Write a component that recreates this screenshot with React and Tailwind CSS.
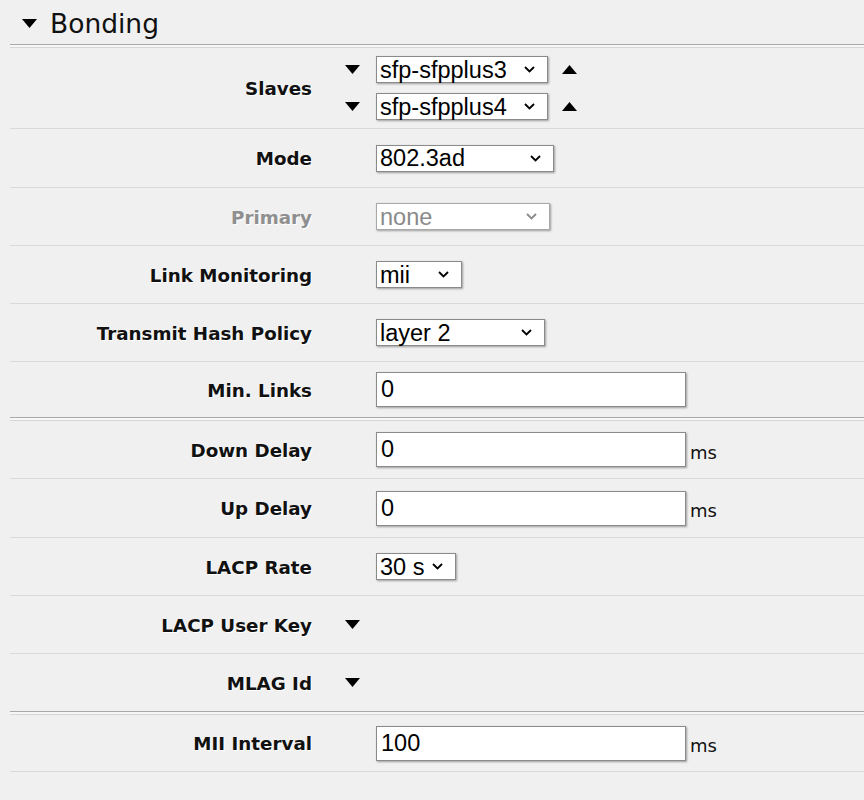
import React from "react";

const labelCls =
  "w-[302px] shrink-0 text-right font-['DejaVu_Sans',sans-serif] font-bold text-[18.3px] leading-none pt-[3px] [text-shadow:1px_1px_0_#ffffff]";
const ctrlFont = "font-['Liberation_Sans',Arial,sans-serif] text-[23.5px] leading-none";

function Tri({ up = false, color = "#000" }) {
  return (
    <svg width="15" height="9" viewBox="0 0 15 9" className="block">
      {up ? (
        <polygon points="0,9 15,9 7.5,0" fill={color} />
      ) : (
        <polygon points="0,0 15,0 7.5,9" fill={color} />
      )}
    </svg>
  );
}

function Chevron({ color = "#000" }) {
  return (
    <svg width="11" height="7" viewBox="0 0 11 7" className="block">
      <polyline points="1,1 5.5,5.5 10,1" fill="none" stroke={color} strokeWidth="1.8" />
    </svg>
  );
}

function Select({ value, width, disabled = false }) {
  return (
    <div
      className={`flex items-center justify-between h-[27px] bg-white border pl-[3px] pr-[12px] shadow-[1px_1px_2px_rgba(0,0,0,0.35)] ${ctrlFont} ${
        disabled ? "border-[#a8a8a8] text-[#8a8a8a]" : "border-[#8a8a8a] text-black"
      }`}
      style={{ width }}
    >
      <span className="pt-[2px]">{value}</span>
      <Chevron color={disabled ? "#8a8a8a" : "#000"} />
    </div>
  );
}

function Input({ value }) {
  return (
    <div
      className={`flex items-center w-[310px] h-[35px] bg-white border border-[#8a8a8a] pl-[4px] pt-[1px] shadow-[1px_1px_2px_rgba(0,0,0,0.35)] ${ctrlFont} text-black`}
    >
      {value}
    </div>
  );
}

function Row({ label, children, disabled = false, h = "h-[58px]", noBorder = false }) {
  return (
    <div className={`flex items-center ${h} ${noBorder ? "" : "border-b border-[#d9d9d9]"}`}>
      <div className={`${labelCls} ${disabled ? "text-[#8f8f8f]" : "text-[#111]"}`}>{label}</div>
      <div className="ml-[64px] flex items-center">{children}</div>
    </div>
  );
}

function DoubleSep() {
  return (
    <div className="h-[4px] border-t border-[#a9a9a9] border-b border-b-[#d6d6d6] bg-[#f7f7f7]" />
  );
}

function Ms() {
  return (
    <span className="ml-[4px] mt-[6px] font-['DejaVu_Sans',sans-serif] text-[18px] leading-none text-[#111]">
      ms
    </span>
  );
}

export default function App() {
  return (
    <div className="w-[864px] h-[800px] bg-[#f0f0f0] overflow-hidden">
      <div className="h-[44px] flex items-center pl-[22px] pt-[3px]">
        <Tri />
        <span className="ml-[13px] font-['DejaVu_Sans',sans-serif] text-[26.5px] leading-none text-[#111] mt-[1px]">
          Bonding
        </span>
      </div>
      <div className="ml-[10px]">
        <DoubleSep />
        <div className="flex items-center h-[81px] border-b border-[#d9d9d9]">
          <div className={`${labelCls} text-[#111]`}>Slaves</div>
          <div className="ml-[33px] flex flex-col gap-[10px]">
            {["sfp-sfpplus3", "sfp-sfpplus4"].map((v) => (
              <div key={v} className="flex items-center">
                <Tri />
                <div className="ml-[16px]">
                  <Select value={v} width={172} />
                </div>
                <div className="ml-[14px]">
                  <Tri up />
                </div>
              </div>
            ))}
          </div>
        </div>
        <Row label="Mode" h="h-[59px]">
          <Select value="802.3ad" width={178} />
        </Row>
        <Row label="Primary" disabled>
          <Select value="none" width={174} disabled />
        </Row>
        <Row label="Link Monitoring">
          <Select value="mii" width={86} />
        </Row>
        <Row label="Transmit Hash Policy">
          <Select value="layer 2" width={169} />
        </Row>
        <Row label="Min. Links" h="h-[55px]" noBorder>
          <Input value="0" />
        </Row>
        <DoubleSep />
        <Row label="Down Delay">
          <Input value="0" />
          <Ms />
        </Row>
        <Row label="Up Delay" h="h-[59px]">
          <Input value="0" />
          <Ms />
        </Row>
        <Row label="LACP Rate">
          <Select value="30 s" width={80} />
        </Row>
        <div className="flex items-center h-[58px] border-b border-[#d9d9d9]">
          <div className={`${labelCls} text-[#111]`}>LACP User Key</div>
          <div className="ml-[33px]">
            <Tri />
          </div>
        </div>
        <div className="flex items-center h-[57px]">
          <div className={`${labelCls} text-[#111]`}>MLAG Id</div>
          <div className="ml-[33px]">
            <Tri />
          </div>
        </div>
        <DoubleSep />
        <Row label="MII Interval" h="h-[57px]">
          <Input value="100" />
          <Ms />
        </Row>
      </div>
    </div>
  );
}
